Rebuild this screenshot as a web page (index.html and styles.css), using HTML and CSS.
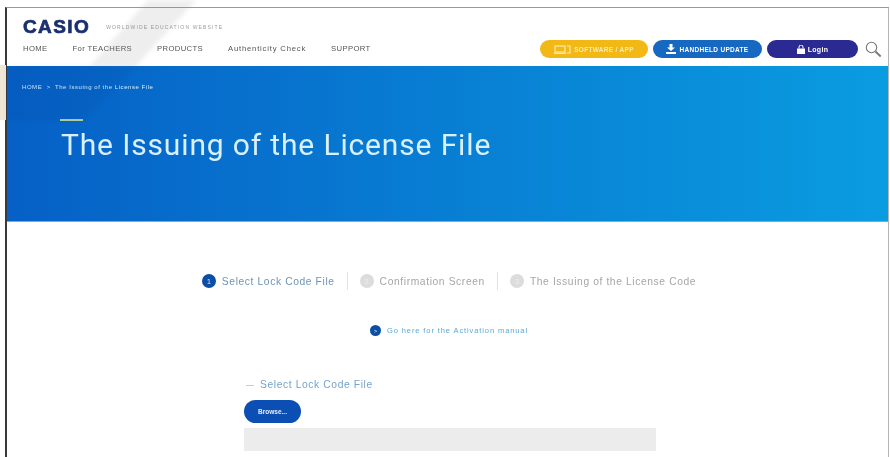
FILE: index.html
```html
<!DOCTYPE html>
<html lang="en">
<head>
    <meta charset="UTF-8">
    <meta name="viewport" content="width=device-width, initial-scale=1.0">
    <title>The Issuing of the License File</title>
    <link rel="stylesheet" href="styles.css">
</head>
<body>
    <div class="frame">
        <header class="site-header">
            <div class="brand-row">
                <span class="logo">CASIO</span>
                <span class="tagline">WORLDWIDE EDUCATION WEBSITE</span>
            </div>
            <div class="nav-row">
                <nav class="nav">
                    <a>HOME</a>
                    <a>For TEACHERS</a>
                    <a>PRODUCTS</a>
                    <a class="nav-wide">Authenticity Check</a>
                    <a>SUPPORT</a>
                </nav>
                <div class="actions">
                    <a class="pill pill-yellow">
                        <svg width="17" height="9" viewBox="0 0 17 9" fill="none" stroke="#fbe9ab" stroke-width="1.2"><rect x="1" y="1" width="10" height="6"/><path d="M0 8.4h12M13 1h3v7h-3"/></svg>
                        SOFTWARE / APP
                    </a>
                    <a class="pill pill-blue">
                        <svg width="10" height="10" viewBox="0 0 10 10" fill="#fff"><path d="M3.5 0h3v3.5H9L5 7 1 3.5h2.5z"/><path d="M0 8h10v2H0z"/></svg>
                        HANDHELD UPDATE
                    </a>
                    <a class="pill pill-navy">
                        <svg width="8" height="9" viewBox="0 0 8 9" fill="#fff"><path d="M0 3.5h8V9H0z"/><path d="M2 3.5V2a2 2 0 0 1 4 0v1.5" fill="none" stroke="#fff"/></svg>
                        Login
                    </a>
                    <svg class="search" width="17" height="17" viewBox="0 0 17 17" fill="none" stroke="#777"><circle cx="6.5" cy="6.5" r="5.2" stroke-width="1.1"/><path d="M10.5 10.5l5.2 5" stroke-width="1.8"/></svg>
                </div>
            </div>
        </header>

        <section class="hero">
            <p class="crumbs">HOME &nbsp;&gt;&nbsp; The Issuing of the License File</p>
            <span class="hero-rule"></span>
            <h1>The Issuing of the License File</h1>
        </section>

        <main class="content">
            <ol class="steps">
                <li class="step step-on"><span class="dot">1</span>Select Lock Code File</li>
                <li class="step"><span class="dot">2</span>Confirmation Screen</li>
                <li class="step"><span class="dot">3</span>The Issuing of the License Code</li>
            </ol>
            <a class="manual"><span class="dot">&gt;</span>Go here for the Activation manual</a>
            <div class="form-block">
                <h2>Select Lock Code File</h2>
                <button class="browse">Browse...</button>
                <div class="file-box"></div>
            </div>
        </main>
    </div>

    <!-- grey diagonal and beige patch lying over the page edge -->
    <svg class="overlay" width="890" height="130" viewBox="0 0 890 130">
        <path d="M0 65h6v55H0z" fill="#efe6d6"/>
        <path class="streak" d="M148 0h48l-60 66H90z" fill="#8a8a8a" fill-opacity=".14"/>
        <path class="streak" d="M90 66h46l-52 54H7V66z" fill="#002a70" fill-opacity=".07"/>
    </svg>
</body>
</html>
```

FILE: styles.css
```css
html, body {
    margin: 0;
    height: 457px;
    overflow: hidden;
    background: #fff;
}
body {
    padding: 7px 1px 0 5px;
    box-sizing: border-box;
    position: relative;
    font-family: "Liberation Sans", Arial, sans-serif;
}
.frame {
    height: 450px;
    border-left: 2px solid #3a3a3a;
    border-top: 1px solid #999;
    border-right: 1px solid #b5b5b5;
    filter: blur(0.6px);
}

/* header */
.site-header {
    height: 58px;
    box-sizing: border-box;
    padding: 11px 6px 0 16px;
}
.brand-row {
    display: flex;
    align-items: center;
    gap: 16px;
    height: 16px;
}
.logo {
    font-size: 19px;
    font-weight: bold;
    letter-spacing: 1.4px;
    color: #1b2f70;
    -webkit-text-stroke: 0.7px #1b2f70;
}
.tagline {
    font-size: 5px;
    letter-spacing: 1.15px;
    color: #9a9a9a;
}
.nav-row {
    display: flex;
    justify-content: space-between;
    align-items: center;
    margin-top: 3px;
    height: 20px;
}
.nav {
    display: flex;
    gap: 25px;
    font-size: 7.7px;
    letter-spacing: 0.35px;
    color: #555;
}
.nav-wide {
    letter-spacing: 0.8px;
}
.actions {
    display: flex;
    align-items: center;
    gap: 5px;
    margin-top: 2px;
}
.pill {
    display: flex;
    justify-content: center;
    align-items: center;
    gap: 3px;
    height: 18px;
    width: 108px;
    border-radius: 9px;
    font-size: 6.5px;
    font-weight: bold;
    letter-spacing: 0.3px;
    color: #fff;
}
.pill-yellow { background: #f2b916; color: #fbe9ab; }
.pill-blue { background: #1668c0; width: 109px; }
.pill-navy { background: #2b2a92; width: 91px; font-size: 7px; }
.search { margin-left: 2px; }

/* blue band */
.hero {
    height: 156px;
    box-sizing: border-box;
    padding: 17px 0 0 15px;
    background: linear-gradient(90deg, #0660c6, #0a9ce0);
    border-bottom: 1px solid #5fb6ee;
    color: #d8f0ff;
}
.crumbs {
    margin: 0;
    font-size: 6px;
    letter-spacing: 0.55px;
    line-height: 8px;
}
.hero-rule {
    display: block;
    width: 23px;
    height: 2px;
    margin: 28px 0 0 38px;
    background: #b5cf9a;
}
h1 {
    margin: 7px 0 0 39px;
    font-family: Roboto, sans-serif;
    font-size: 30px;
    font-weight: 400;
    letter-spacing: 0.85px;
    line-height: 34px;
}

/* steps and form */
.content {
    display: flex;
    flex-direction: column;
    align-items: center;
    padding-left: 3px;
}
.steps {
    display: flex;
    align-items: center;
    margin: 50px 0 0;
    padding: 0;
    list-style: none;
}
.step {
    display: flex;
    align-items: center;
    gap: 6px;
    font-size: 10.3px;
    letter-spacing: 0.6px;
    color: #a6a6a6;
    height: 18px;
    padding: 0 12px;
    border-left: 1px solid #e2e2e2;
}
.step:first-child { border-left: none; }
.step-on { color: #6f93b8; }
.dot {
    display: flex;
    justify-content: center;
    align-items: center;
    width: 14px;
    height: 14px;
    border-radius: 50%;
    background: #dcdcdc;
    color: #eee;
    font-size: 7px;
    letter-spacing: 0;
}
.step-on .dot {
    background: #0c4ea6;
    color: #dbe6f5;
}
.manual {
    display: flex;
    align-items: center;
    gap: 6px;
    margin-top: 35px;
    font-size: 7.5px;
    letter-spacing: 0.9px;
    color: #5aa8d6;
}
.manual .dot {
    width: 11px;
    height: 11px;
    background: #0c4ea6;
    color: #dbe6f5;
    font-size: 6px;
}
.form-block {
    width: 412px;
    margin: 43px 0 0 2px;
}
h2 {
    display: flex;
    align-items: center;
    gap: 6px;
    margin: 0 0 0 2px;
    font-size: 10.3px;
    font-weight: normal;
    letter-spacing: 0.6px;
    line-height: 12px;
    color: #74a3cc;
}
h2::before {
    content: "";
    width: 8px;
    height: 1px;
    background: #f0cf6a;
}
.browse {
    display: block;
    width: 57px;
    height: 23px;
    margin-top: 9px;
    padding: 0;
    border: none;
    border-radius: 12px;
    background: #0b4fb4;
    color: #e4eefb;
    font-family: inherit;
    font-size: 6.5px;
    font-weight: bold;
}
.file-box {
    height: 23px;
    margin-top: 5px;
    background: #ececec;
}

.overlay {
    position: absolute;
    top: 0;
    left: 0;
    pointer-events: none;
}
.streak {
    filter: blur(2px);
}
```
